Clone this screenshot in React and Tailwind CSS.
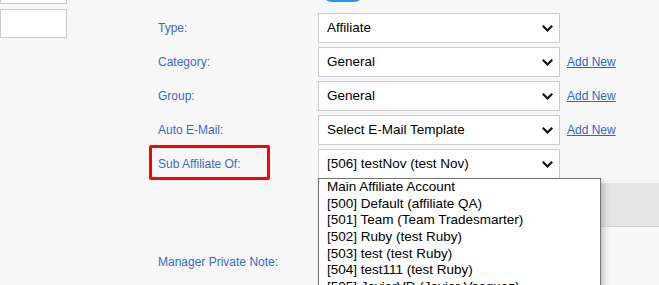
import React from "react";

function Chevron() {
  return (
    <svg width="11" height="8" viewBox="0 0 11 8" className="absolute right-[6px] top-[11px]">
      <path d="M1.5 1.5 L5.5 5.5 L9.5 1.5" fill="none" stroke="#111" strokeWidth="2.2" strokeLinecap="square" />
    </svg>
  );
}

function Select({ value }) {
  return (
    <div className="relative w-[242px] h-[30px] bg-white border border-[#cccccc] text-[13.5px] text-black leading-[28px] pl-[8px]">
      {value}
      <Chevron />
    </div>
  );
}

function Row({ label, value, addNew, highlight }) {
  return (
    <div className="flex items-center h-[30px]">
      <div className="w-[169px] h-[30px] relative flex items-center">
        {highlight && (
          <div className="absolute left-0 top-[-4px] w-[121px] h-[35px] border-[3px] border-[#ff0000] rounded-[2px]" />
        )}
        <span className="pl-[9px] text-[12px] text-[#3b6cbb]">{label}</span>
      </div>
      <Select value={value} />
      {addNew && (
        <a className="ml-[7px] text-[12px] text-[#3a66b8] underline">Add New</a>
      )}
    </div>
  );
}

const items = [
  "Main Affiliate Account",
  "[500] Default (affiliate QA)",
  "[501] Team (Team Tradesmarter)",
  "[502] Ruby (test Ruby)",
  "[503] test (test Ruby)",
  "[504] test111 (test Ruby)",
  "[505] JavierVD (Javier Vasquez)",
];

export default function App() {
  return (
    <div
      className="relative w-[659px] h-[285px] overflow-hidden bg-[#f7f7f7]"
      style={{ fontFamily: '"Liberation Sans", Arial, sans-serif' }}
    >
      <div className="flex">
        <div className="w-[67px] flex flex-col">
          <div className="h-[26px] mt-[-22px] bg-white border border-[#cccccc]" />
          <div className="mt-[5px] h-[29px] bg-white border border-[#cccccc]" />
        </div>
        <div className="ml-[82px] flex flex-col">
          <div className="relative h-[13px]">
            <div className="absolute left-[173px] top-[-20px] w-[42px] h-[22px] rounded-[10px] bg-[#2196f3]" />
          </div>
          <div className="flex flex-col gap-[4px]">
            <Row label="Type:" value="Affiliate" />
            <Row label="Category:" value="General" addNew />
            <Row label="Group:" value="General" addNew />
            <Row label="Auto E-Mail:" value="Select E-Mail Template" addNew />
            <Row label="Sub Affiliate Of:" value="[506] testNov (test Nov)" highlight />
          </div>
          <div className="mt-[74px] pl-[9px] text-[12px] text-[#3b6cbb]">Manager Private Note:</div>
        </div>
      </div>

      <div className="absolute left-[400px] top-[183px] w-[259px] h-[44px] bg-[#e4e4e4] border-b border-[#d4d4d4]" />

      <div className="absolute left-[318px] top-[178px] w-[283px] h-[120px] bg-white border border-[#767676] shadow-[3px_3px_6px_rgba(0,0,0,0.2)]">
        {items.map((t) => (
          <div key={t} className="pl-[8px] h-[16.7px] leading-[16px] text-[13.5px] text-black whitespace-nowrap">
            {t}
          </div>
        ))}
      </div>
    </div>
  );
}
